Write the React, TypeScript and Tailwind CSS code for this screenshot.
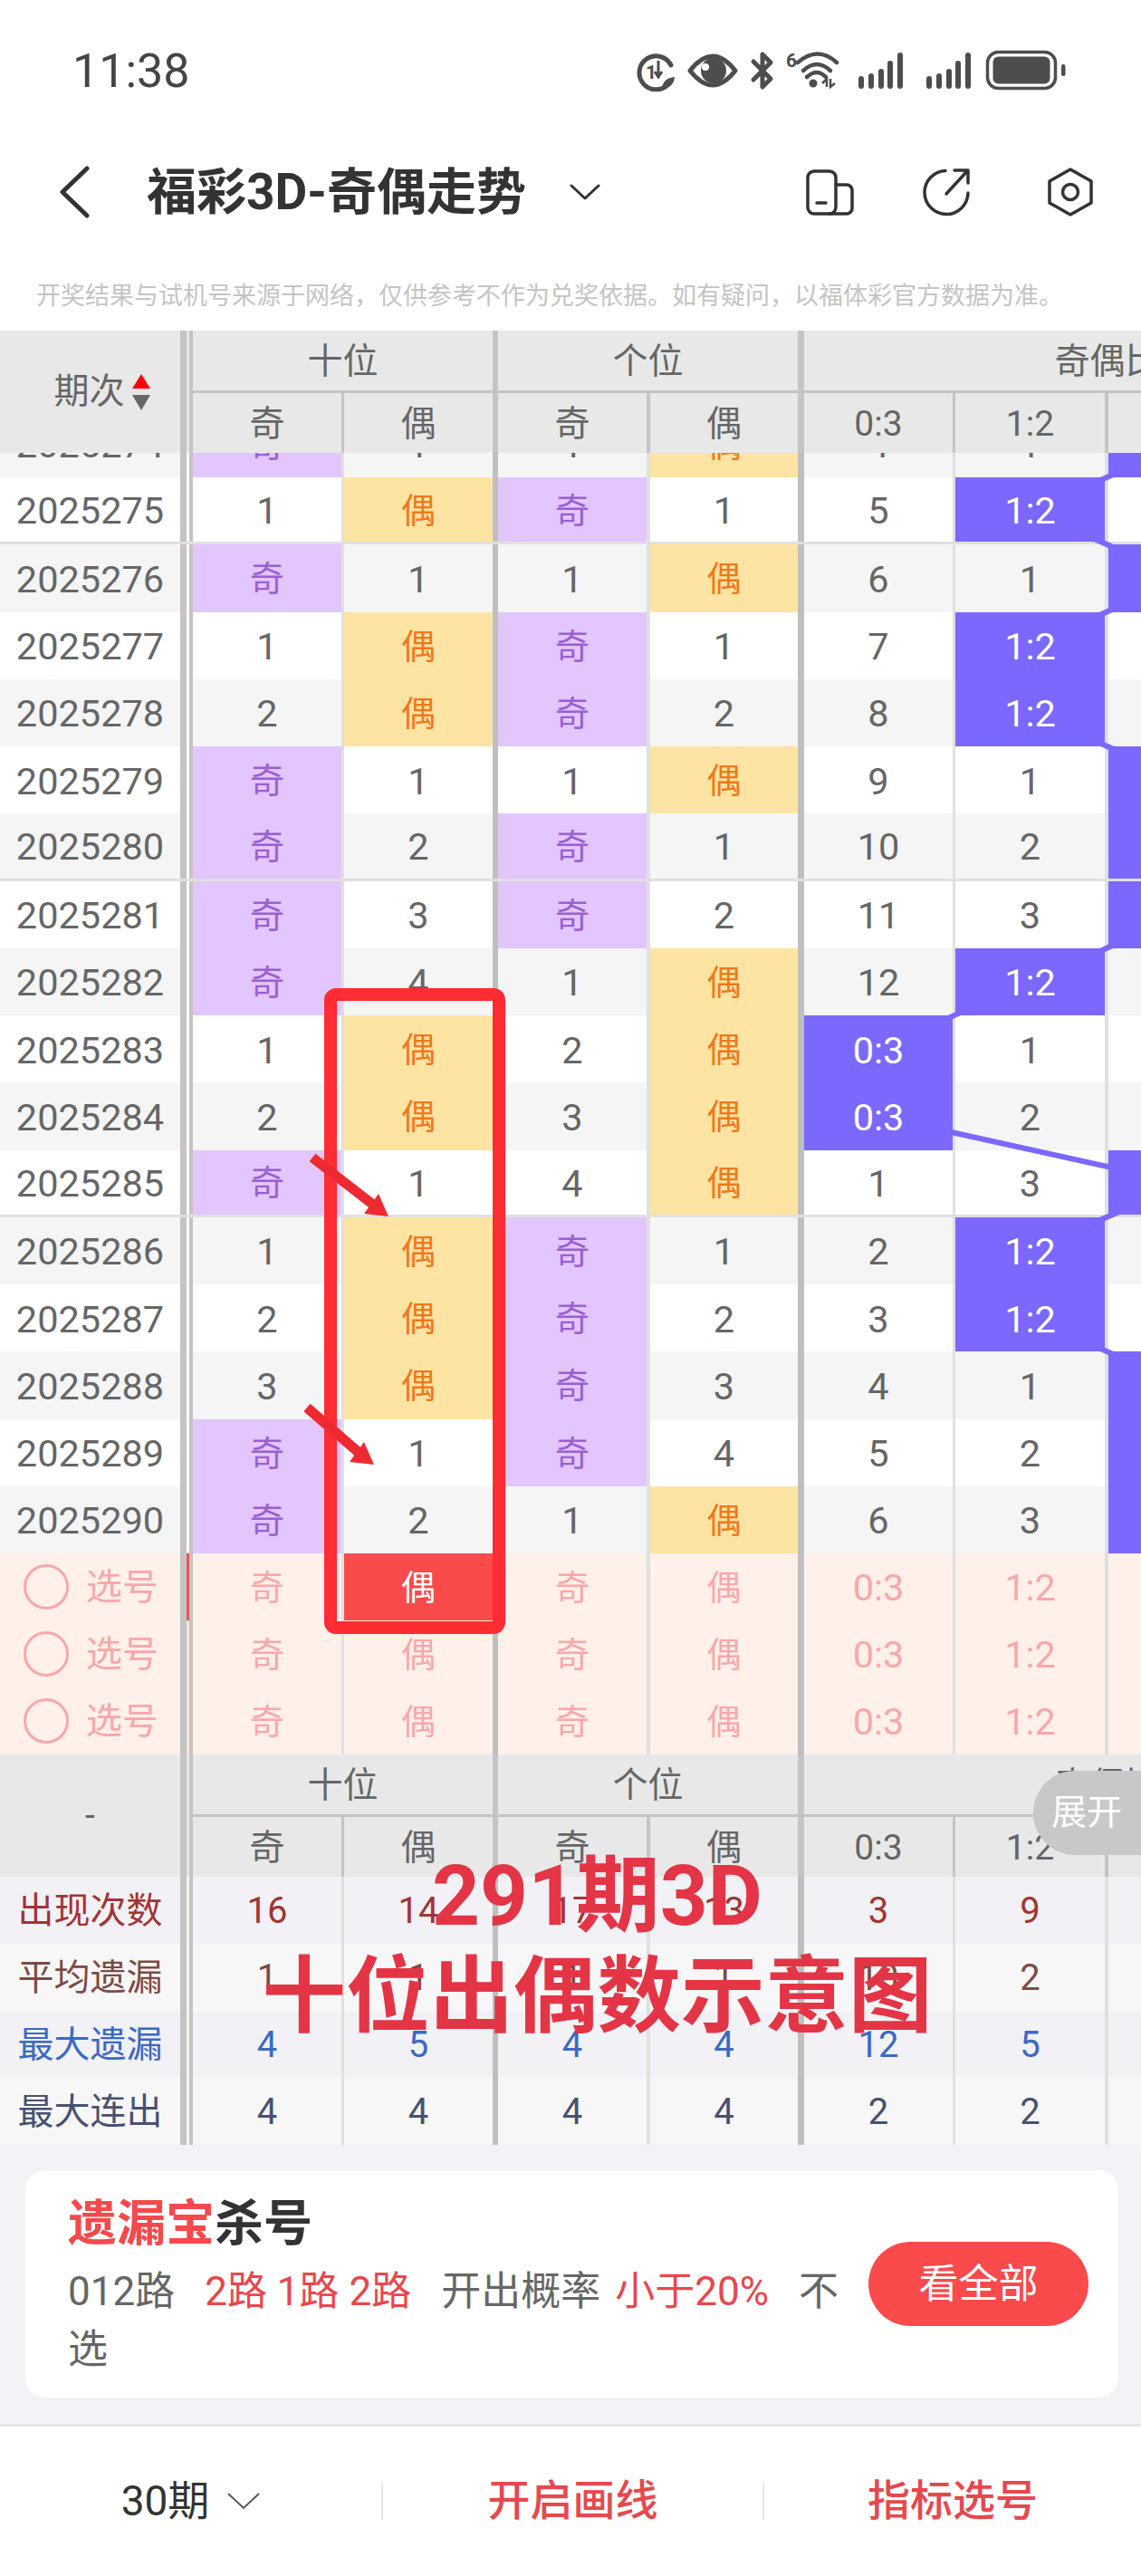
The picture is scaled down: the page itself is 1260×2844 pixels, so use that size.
const FONT = "font-[Roboto,'Noto_Sans_CJK_SC',sans-serif]";

const colWidths = [
  "w-[167px] border-r-[3px]",
  "w-[170px] border-r-[6px]",
  "w-[168px] border-r-[4px]",
  "w-[170px] border-r-[7px]",
  "w-[167px] border-r-[3px]",
  "w-[169px] border-r-[4px]",
  "w-[167px] border-r-[3px]",
  "w-[167px] border-r-0",
];
const bodyBorders = [
  "border-[#e0e0e0]",
  "border-[#bfbfbf]",
  "border-[#e0e0e0]",
  "border-[#bfbfbf]",
  "border-[#e0e0e0]",
  "border-[#e0e0e0]",
  "border-[#e0e0e0]",
  "border-[#e0e0e0]",
];
const subHeads = ["奇", "偶", "奇", "偶", "0:3", "1:2", "2:1", "3:0"];

// id, 十奇, 十偶, 个奇, 个偶, 0:3, 1:2, 2:1
const rows = [
  ["2025274", "奇", "1", "1", "偶", "4", "1", "G"],
  ["2025275", "1", "偶", "奇", "1", "5", "1:2", ""],
  ["2025276", "奇", "1", "1", "偶", "6", "1", "G"],
  ["2025277", "1", "偶", "奇", "1", "7", "1:2", ""],
  ["2025278", "2", "偶", "奇", "2", "8", "1:2", ""],
  ["2025279", "奇", "1", "1", "偶", "9", "1", "G"],
  ["2025280", "奇", "2", "奇", "1", "10", "2", "G"],
  ["2025281", "奇", "3", "奇", "2", "11", "3", "G"],
  ["2025282", "奇", "4", "1", "偶", "12", "1:2", ""],
  ["2025283", "1", "偶", "2", "偶", "0:3", "1", ""],
  ["2025284", "2", "偶", "3", "偶", "0:3", "2", ""],
  ["2025285", "奇", "1", "4", "偶", "1", "3", "G"],
  ["2025286", "1", "偶", "奇", "1", "2", "1:2", ""],
  ["2025287", "2", "偶", "奇", "2", "3", "1:2", ""],
  ["2025288", "3", "偶", "奇", "3", "4", "1", "G"],
  ["2025289", "奇", "1", "奇", "4", "5", "2", "G"],
  ["2025290", "奇", "2", "1", "偶", "6", "3", "G"],
];

const stats = [
  { label: "出现次数", color: "text-[#a23434]", bg: "bg-[#f1f1f6]", vals: ["16", "14", "17", "13", "3", "9"] },
  { label: "平均遗漏", color: "text-[#7d4a44]", bg: "bg-[#f7f7f8]", vals: ["1", "1", "1", "1", "10", "2"] },
  { label: "最大遗漏", color: "text-[#3b69c4]", bg: "bg-[#f1f1f6]", vals: ["4", "5", "4", "4", "12", "5"] },
  { label: "最大连出", color: "text-[#475171]", bg: "bg-[#f7f7f8]", vals: ["4", "4", "4", "4", "2", "2"] },
];

const rowTop = -47.25;
const rowH = 74.25;
const colX = { E: 970, F: 1138, G: 1307 };
const trendPoints = rows
  .map((r, i) => {
    const x = r[7] === "G" ? colX.G : r[6] === "1:2" ? colX.F : colX.E;
    return `${x},${rowTop + rowH * i + 37}`;
  })
  .join(" ");

function cellStyle(v: string) {
  if (v === "奇") return { bg: "bg-[#e2c6fd]", fg: "text-[#9a5fd2]" };
  if (v === "偶") return { bg: "bg-[#fee4a2]", fg: "text-[#f0781c]" };
  if (v === "0:3" || v === "1:2" || v === "G") return { bg: "bg-[#7b68ff]", fg: "text-white" };
  return { bg: "", fg: "text-[#666666]" };
}

function Divider({ className = "bg-white" }: { className?: string }) {
  return <div className={`w-[14px] h-full shrink-0 border-l-[7px] border-r-[4px] border-[#c5c4c1] ${className}`} />;
}

function TableHead({ left }: { left: React.ReactNode }) {
  return (
    <div className="flex w-max h-[135px] bg-[#e8e8e8] text-[39px] text-[#666666]">
      <div className="w-[199px] shrink-0 flex items-center justify-center">{left}</div>
      <Divider className="bg-[#e8e8e8]" />
      <div className="flex flex-col">
        <div className="flex h-[69px]">
          <div className="w-[337px] pt-[2px] border-r-[6px] border-b-[3px] border-[#c4c4c4] flex items-center justify-center">十位</div>
          <div className="w-[338px] pt-[2px] border-r-[7px] border-b-[3px] border-[#c4c4c4] flex items-center justify-center">个位</div>
          <div className="w-[670px] pt-[2px] border-b-[3px] border-[#c4c4c4] flex items-center justify-center">奇偶比</div>
        </div>
        <div className="flex h-[66px]">
          {subHeads.map((h, i) => (
            <div key={i} className={`${colWidths[i]} pt-[2px] border-[#c4c4c4] shrink-0 flex items-center justify-center`}>
              {h}
            </div>
          ))}
        </div>
      </div>
    </div>
  );
}

function DataRow({ row, index }: { row: string[]; index: number }) {
  const zebra = index % 2 === 0 ? "bg-[#f5f5f5]" : "bg-white";
  const thick = index % 5 === 1 && index < 16 ? "border-b-[3px] border-[#e0e0e0]" : "";
  return (
    <div className={`flex w-max h-[74.25px] ${zebra} ${thick} text-[41.5px]`}>
      <div className="w-[199px] shrink-0 pt-[3px] flex items-center justify-center text-[#666666]">
        <span>{row[0]}</span>
      </div>
      <Divider />
      {[...row.slice(1), ""].map((v, i) => {
        const s = cellStyle(v);
        return (
          <div key={i} className={`${colWidths[i]} ${bodyBorders[i]} shrink-0 h-full`}>
            <div className={`h-full pt-[3px] flex items-center justify-center ${s.bg} ${s.fg} ${v === "奇" || v === "偶" ? "text-[38px]" : ""}`}>
              {v !== "G" && <span className="relative z-20">{v}</span>}
            </div>
          </div>
        );
      })}
    </div>
  );
}

function PickRow({ first }: { first?: boolean }) {
  const values = ["奇", "偶", "奇", "偶", "0:3", "1:2", "", ""];
  return (
    <div className="flex w-max h-[74px] bg-[#fff0ea] text-[38px] text-[#f8a8aa]">
      <div className="w-[199px] shrink-0 flex items-center pl-[26px]">
        <div className="w-[50px] h-[50px] rounded-full border-[3px] border-[#f8a8aa]" />
        <span className="ml-[19px] pt-[2px] text-[40px]">选号</span>
      </div>
      <Divider className={first ? "bg-[#e85555]" : "bg-[#f7e4de]"} />
      {values.map((v, i) => (
        <div
          key={i}
          className={`${colWidths[i]} ${bodyBorders[i]} shrink-0 pt-[2px] flex items-center justify-center ${
            first && i === 1 ? "bg-[#f94a4c] text-white" : ""
          } ${i > 3 ? "text-[41.5px]" : ""}`}
        >
          {v}
        </div>
      ))}
    </div>
  );
}

function StatusIcons() {
  const bars = [
    [951, 87],
    [962, 84],
    [973, 79],
    [983, 70],
    [994, 61],
  ];
  return (
    <svg viewBox="700 53 480 52" className="w-[480px] h-[52px]" fill="none" stroke="#4d4d4d">
      <path d="M738 93 A18.5 18.5 0 1 1 741 72" strokeWidth="5" strokeLinecap="round" />
      <text x="713" y="87" fontSize="21" fontWeight="700" fill="#4d4d4d" stroke="none" fontFamily="Roboto">1</text>
      <path d="M727 67 V83 M723 79 L727 85 L731 79" strokeWidth="3" />
      <path d="M731 98 Q732 86 745 85 Q744 97 731 98 Z" fill="#4d4d4d" stroke="none" />
      <path d="M762 78 Q787 46 812 78 Q787 110 762 78 Z" strokeWidth="5" strokeLinejoin="round" />
      <circle cx="788" cy="78" r="14" fill="#4d4d4d" stroke="none" />
      <circle cx="779" cy="74" r="4" fill="#fff" stroke="none" />
      <path d="M832 68 L851 87 L842 96 V60 L851 69 L832 88" strokeWidth="5" strokeLinecap="round" strokeLinejoin="round" />
      <text x="868" y="74" fontSize="21" fontWeight="700" fill="#4d4d4d" stroke="none" fontFamily="Roboto">6</text>
      <path d="M881 69 Q903 50 924 69" strokeWidth="4.5" strokeLinecap="round" />
      <path d="M887 78 Q902 64 917 78" strokeWidth="4.5" strokeLinecap="round" />
      <path d="M891 85 Q902 75 912 85" strokeWidth="4.5" strokeLinecap="round" />
      <circle cx="898" cy="92" r="4.5" fill="#4d4d4d" stroke="none" />
      <path d="M908 92 L913 87 V96 M917 87 V96 L922 92" strokeWidth="2.5" />
      {bars.map(([x, y]) => (
        <g key={x} strokeWidth="6" strokeLinecap="round">
          <path d={`M${x} ${y} V95`} />
          <path d={`M${x + 75} ${y} V95`} />
        </g>
      ))}
      <rect x="1090.5" y="57.5" width="75" height="40" rx="12" strokeWidth="3.5" />
      <rect x="1096.5" y="62.5" width="63" height="30" rx="6" fill="#4d4d4d" stroke="none" />
      <rect x="1172" y="71" width="4.5" height="13" rx="2" fill="#4d4d4d" stroke="none" />
    </svg>
  );
}

export default function App() {
  return (
    <div className={`relative w-[1260px] h-[2844px] overflow-hidden bg-white ${FONT}`}>
      {/* status bar */}
      <div className="h-[158px] flex items-center justify-between pl-[80px] pr-[80px]">
        <span className="text-[52px] text-[#444444]">11:38</span>
        <StatusIcons />
      </div>

      {/* nav */}
      <div className="h-[108px] flex items-center pl-[64px]">
        <svg viewBox="0 0 36 58" className="w-[36px] h-[58px]" fill="none" stroke="#333" strokeWidth="5" strokeLinecap="round" strokeLinejoin="round">
          <path d="M32 3 L5 29 L32 55" />
        </svg>
        <h1 className="ml-[62px] text-[55px] font-bold text-[#333333] whitespace-nowrap">福彩3D-奇偶走势</h1>
        <svg viewBox="0 0 34 18" className="ml-[48px] w-[34px] h-[18px]" fill="none" stroke="#333" strokeWidth="3" strokeLinecap="round" strokeLinejoin="round">
          <path d="M2 2 L17 16 L32 2" />
        </svg>
        <svg viewBox="890 185 54 54" className="ml-auto w-[54px] h-[54px]" fill="none" stroke="#333" strokeWidth="3.5" strokeLinecap="round" strokeLinejoin="round">
          <rect x="892" y="189" width="31" height="47" rx="7" />
          <path d="M923 204 H935 A6 6 0 0 1 941 210 V230 A6 6 0 0 1 935 236 H915" />
          <path d="M902 224 H912" />
        </svg>
        <svg viewBox="1018 185 54 54" className="ml-[74px] w-[54px] h-[54px]" fill="none" stroke="#333" strokeWidth="3.5" strokeLinecap="round" strokeLinejoin="round">
          <path d="M1044 188.5 A24 24 0 1 0 1069 213" />
          <path d="M1045 214 L1068 189 M1054 188 H1069 V202" />
        </svg>
        <svg viewBox="1155 185 54 54" className="ml-[83px] mr-[51px] w-[54px] h-[54px]" fill="none" stroke="#333" strokeWidth="3.5" strokeLinecap="round" strokeLinejoin="round">
          <path d="M1182 187 L1205 200 V224 L1182 237 L1159 224 V200 Z" />
          <circle cx="1182" cy="212" r="8.5" />
        </svg>
      </div>

      {/* notice */}
      <div className="h-[99px] pt-[41px] pl-[40px] text-[27px] leading-[40px] text-[#c4c4c4] whitespace-nowrap">
        开奖结果与试机号来源于网络，仅供参考不作为兑奖依据。如有疑问，以福体彩官方数据为准。
      </div>

      {/* trend table */}
      <TableHead
        left={
          <div className="flex items-center pl-[26px]">
            <span>期次</span>
            <svg viewBox="0 0 20 40" className="ml-[8px] w-[20px] h-[40px]">
              <path d="M10 0 L20 16 H0 Z" fill="#ff0000" />
              <path d="M0 23 H20 L10 40 Z" fill="#666666" />
            </svg>
          </div>
        }
      />
      <div className="relative h-[1215px] overflow-hidden">
        <div className="-mt-[47.25px]">
          {rows.map((r, i) => (
            <DataRow key={r[0]} row={r} index={i} />
          ))}
        </div>
        <svg className="absolute left-0 top-0 w-[1260px] h-[1215px] z-10" viewBox="0 0 1260 1215" fill="none">
          <polyline points={trendPoints} stroke="#7b68ff" strokeWidth="6" />
        </svg>
      </div>
      <PickRow first />
      <PickRow />
      <PickRow />

      {/* stats */}
      <TableHead left={<span>-</span>} />
      {stats.map((s) => (
        <div key={s.label} className={`flex w-max h-[74px] text-[40px] ${s.bg} ${s.color}`}>
          <div className="w-[199px] shrink-0 pt-[2px] flex items-center justify-center">{s.label}</div>
          <Divider className="bg-[#f5f5f5]" />
          {[...s.vals, "", ""].map((v, i) => (
            <div key={i} className={`${colWidths[i]} ${bodyBorders[i]} shrink-0 pt-[2px] flex items-center justify-center`}>
              {v}
            </div>
          ))}
        </div>
      ))}

      {/* kill number card */}
      <div className="h-[308px] bg-[#f2f2f7] pt-[28px] pl-[28px] pr-[25px]">
        <div className="h-[251px] bg-white rounded-[22px] flex items-center pl-[47px] pr-[33px]">
          <div className="w-[875px] self-start pt-[30px]">
            <div className="text-[54px] leading-[60px] font-bold text-[#333333]">
              <span className="text-[#f5494c]">遗漏宝</span>杀号
            </div>
            <p className="mt-[12px] text-[44px] leading-[64px] text-[#666666]">
              012路
              <span className="ml-[33px] text-[#e8474c]">2路&nbsp;1路&nbsp;2路</span>
              <span className="ml-[33px]">开出概率</span>
              <span className="ml-[16px] text-[#e8474c]">小于20%</span>
              <span className="ml-[33px]">不选</span>
            </p>
          </div>
          <button className="ml-auto w-[243px] h-[93px] rounded-full bg-[#fa4a4c] text-white text-[44px]">看全部</button>
        </div>
      </div>

      {/* bottom bar */}
      <div className="h-[167px] border-t-[3px] border-[#e6e6e6] flex items-center bg-white">
        <div className="w-[421px] flex items-center justify-center text-[46px] text-[#333333]">
          30期
          <svg viewBox="0 0 36 20" className="ml-[20px] w-[36px] h-[20px]" fill="none" stroke="#555" strokeWidth="2">
            <path d="M1 2 L18 18 L35 2" />
          </svg>
        </div>
        <div className="w-[421px] h-[41px] border-l-2 border-[#e5e5e5] flex items-center justify-center text-[47px] font-medium text-[#e5494e]">开启画线</div>
        <div className="w-[418px] h-[41px] border-l-2 border-[#e5e5e5] flex items-center justify-center text-[47px] font-medium text-[#e5494e]">指标选号</div>
      </div>

      {/* expand tab */}
      <div className="absolute left-[1141px] top-[1955px] z-30 w-[119px] h-[93px] rounded-l-[46px] bg-[#c8c8c8] flex items-center pl-[20px] text-[39px] text-white">
        展开
      </div>

      {/* hand drawn marks on the screenshot */}
      <svg className="absolute left-0 top-0 z-40 w-[1260px] h-[2844px] pointer-events-none" viewBox="0 0 1260 2844" fill="none">
        <rect x="365" y="1098" width="186" height="699" rx="6" stroke="#fe2c33" strokeWidth="14" />
        <path d="M345 1278 L416 1333" stroke="#ee2a30" strokeWidth="11" />
        <path d="M429 1343 L418 1318 L402 1340 Z" fill="#ee2a30" />
        <path d="M339 1554 L400 1607" stroke="#ee2a30" strokeWidth="11" />
        <path d="M413 1617 L402 1592 L386 1614 Z" fill="#ee2a30" />
      </svg>
      <div className="absolute left-0 top-[2038px] z-40 w-[1260px] flex flex-col items-center pl-[59px] text-[92.5px] leading-[111px] font-bold text-[#e33545] whitespace-nowrap">
        <span>291期3D</span>
        <span>十位出偶数示意图</span>
      </div>
    </div>
  );
}
